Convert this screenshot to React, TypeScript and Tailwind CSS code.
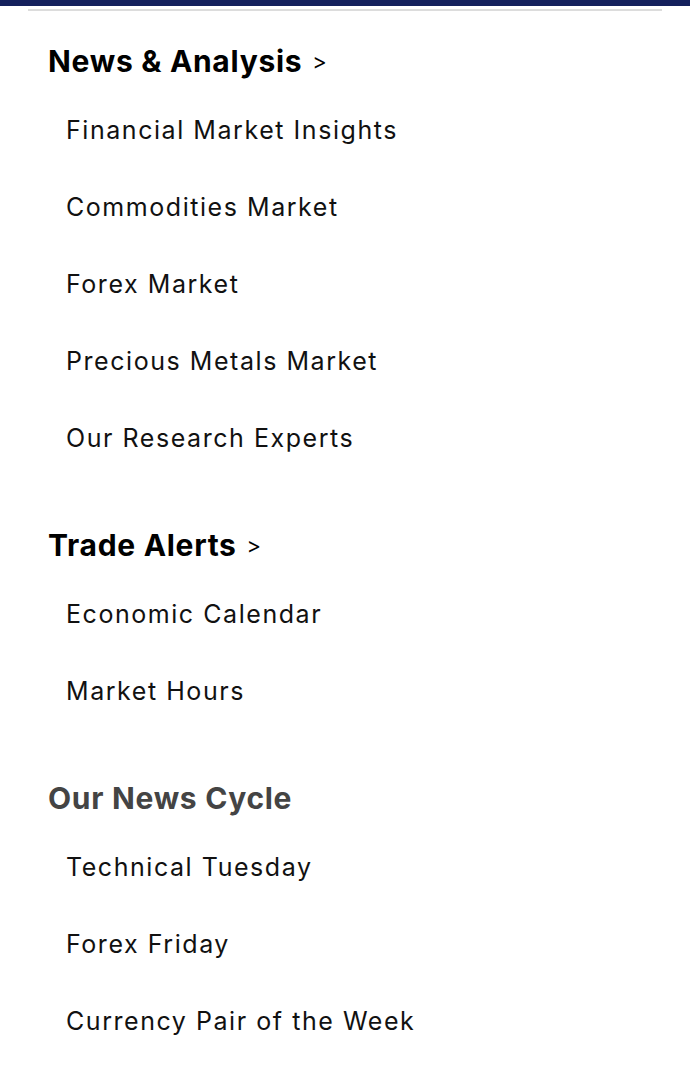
const sections = [
    {
        title: "News & Analysis",
        arrow: true,
        muted: false,
        links: ["Financial Market Insights", "Commodities Market", "Forex Market", "Precious Metals Market", "Our Research Experts"],
    },
    {
        title: "Trade Alerts",
        arrow: true,
        muted: false,
        links: ["Economic Calendar", "Market Hours"],
    },
    {
        title: "Our News Cycle",
        arrow: false,
        muted: true,
        links: ["Technical Tuesday", "Forex Friday", "Currency Pair of the Week"],
    },
];

const App = () => {
    return (
        <div className="min-h-screen w-full bg-white font-['Inter',sans-serif]">
            <div className="h-[6px] w-full bg-[#14205c]" />
            <div className="mx-[28px] mt-[3px] h-[2px] bg-[#dcdcdc]" />
            <nav className="flex flex-col gap-[38px] pt-[20px]">
                {sections.map((section) => (
                    <section key={section.title} className="flex flex-col">
                        <div className="flex h-[61px] items-center pl-[48px]">
                            <h2
                                className={
                                    section.muted
                                        ? "text-[30px] font-bold tracking-[0.7px] text-[#444444]"
                                        : "text-[30px] font-bold tracking-[0.7px] text-black"
                                }
                            >
                                {section.title}
                            </h2>
                            {section.arrow && (
                                <span className="ml-[10px] text-[22px] text-black">&gt;</span>
                            )}
                        </div>
                        {section.links.map((link) => (
                            <a
                                key={link}
                                className="flex h-[77px] items-center pl-[66px] text-[25px] tracking-[1.55px] text-[#111111]"
                            >
                                {link}
                            </a>
                        ))}
                    </section>
                ))}
            </nav>
        </div>
    );
};

export default App;
